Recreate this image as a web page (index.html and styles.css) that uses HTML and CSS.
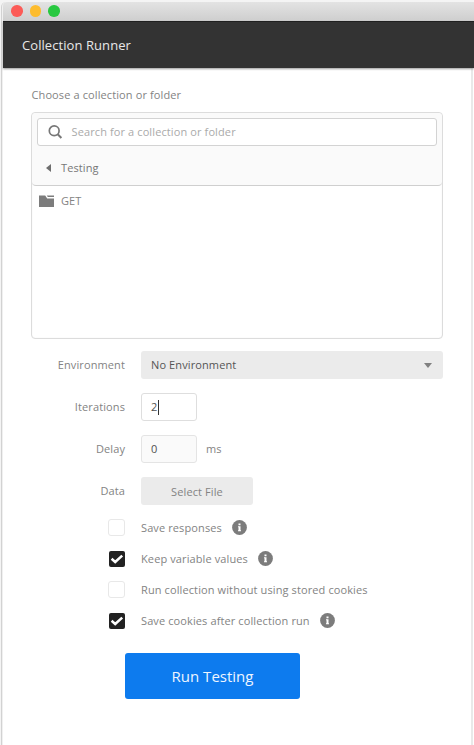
FILE: index.html
```html
<!DOCTYPE html>
<html lang="en">
<head>
<meta charset="utf-8">
<title>Collection Runner</title>
<link rel="stylesheet" href="styles.css">
</head>
<body>
<svg class="defs" width="0" height="0" aria-hidden="true">
  <symbol id="info" viewBox="0 0 15 15"><circle cx="7.5" cy="7.5" r="7.4" fill="#7c7c7c"/><path d="M6.5 3.5h2v1.7h-2zM6 6.3h2.5v4H9v1H6v-1h.5v-3H6z" fill="#fff"/></symbol>
  <symbol id="check" viewBox="0 0 16 16"><path d="M2.6 7.8l3.6 3.2 7-6.4" fill="none" stroke="#fff" stroke-width="2.5"/></symbol>
</svg>
<div class="window">
  <div class="titlebar"><i class="light red"></i><i class="light yellow"></i><i class="light green"></i></div>
  <header class="header"><h1>Collection Runner</h1></header>
  <main class="content">
    <div class="caption">Choose a collection or folder</div>
    <section class="picker">
      <div class="picker-head">
        <div class="search">
          <svg width="15" height="15" viewBox="0 0 15 15"><circle cx="6.2" cy="5.8" r="4.9" fill="none" stroke="#777" stroke-width="1.7"/><path d="M9.7 9.3l3.7 3.7" stroke="#777" stroke-width="2"/></svg>
          <span class="placeholder">Search for a collection or folder</span>
        </div>
        <div class="crumb"><svg width="5" height="8" viewBox="0 0 5 8"><path d="M5 0v8L0 4z" fill="#6e6e6e"/></svg><span>Testing</span></div>
      </div>
      <div class="folder"><svg width="15" height="12" viewBox="0 0 15 12"><path d="M0 .5h6.2l2 3H15V12H0zM7.8 .5H15v1.6H8.8z" fill="#7c7c7c"/></svg><span>GET</span></div>
    </section>
    <div class="row"><label>Environment</label><div class="select"><span>No Environment</span><svg width="8" height="5" viewBox="0 0 8 5"><path d="M0 0h8L4 5z" fill="#808080"/></svg></div></div>
    <div class="row"><label>Iterations</label><div class="input active"><span>2</span><i class="caret"></i></div></div>
    <div class="row"><label>Delay</label><div class="input"><span>0</span></div><span class="unit">ms</span></div>
    <div class="row"><label>Data</label><div class="file">Select File</div></div>
    <div class="options">
      <div class="option"><i class="box"></i><span>Save responses</span><svg class="info"><use href="#info"/></svg></div>
      <div class="option"><i class="box on"><svg><use href="#check"/></svg></i><span>Keep variable values</span><svg class="info"><use href="#info"/></svg></div>
      <div class="option"><i class="box"></i><span>Run collection without using stored cookies</span></div>
      <div class="option"><i class="box on"><svg><use href="#check"/></svg></i><span>Save cookies after collection run</span><svg class="info"><use href="#info"/></svg></div>
    </div>
    <div class="run">Run Testing</div>
  </main>
</div>
</body>
</html>
```
FILE: styles.css
```css
* { box-sizing: border-box; }
body {
  margin: 0;
  height: 745px;
  overflow: hidden;
  background: #f4f4f4;
  color: #838383;
  font: 11px/16px "Open Sans", sans-serif;
  letter-spacing: 0.11px;
}
svg { display: block; flex: none; }
.defs { position: absolute; }
.window {
  margin: 2px 0 0 1px;
  height: 743px;
  border-left: 1px solid #d2d2d2;
  box-shadow: inset 1px 0 #f0f0f0;
  border-radius: 5px 0 0 0;
  background: #fff;
}
.titlebar {
  height: 19px;
  margin-left: 1px;
  padding: 3px 0 0 8px;
  display: flex;
  gap: 7.2px;
  background: linear-gradient(#e3e3e3, #cecece);
  border-radius: 4px 0 0 0;
}
.light { width: 11.5px; height: 11.5px; border-radius: 50%; }
.red { background: #fc5b57; }
.yellow { background: #fdbc2e; }
.green { background: #28c840; }
.header {
  position: relative;
  height: 47px;
  margin-left: 1px;
  padding-left: 19px;
  display: flex;
  align-items: center;
  background: #333;
  border-top: 1px solid #202020;
  box-shadow: 0 1px 2px #999;
}
h1 { margin: 0; font-size: 13px; font-weight: 400; color: #e8e8e8; letter-spacing: 0.07px; }
.content {
  width: 471px;
  height: 677px;
  padding: 19px 28px 0 29px;
  border-right: 2px solid #e9e9e9;
}
.caption { height: 25px; padding-left: 0.5px; }
.picker {
  height: 227px;
  border: 1px solid #dcdcdc;
  border-radius: 4px;
  box-shadow: inset 0 0 1px #ddd;
}
.picker-head {
  height: 73px;
  padding: 5px 5px 0;
  background: #fafafa;
  border-bottom: 1px solid #cfcfcf;
  border-radius: 4px;
}
.search {
  height: 28px;
  padding-left: 10px;
  display: flex;
  align-items: center;
  gap: 8.5px;
  border: 1px solid #d3d3d3;
  border-radius: 3px;
  background: #fff;
}
.placeholder { color: #aaa; }
.crumb { height: 42px; padding: 1px 0 0 9px; display: flex; align-items: center; gap: 10px; color: #777; }
.folder { height: 30px; padding-left: 7px; display: flex; align-items: center; gap: 7px; }
.folder span { margin-top: -1px; }
.row { height: 28px; margin-bottom: 14px; display: flex; align-items: center; }
.picker + .row { margin-top: 12px; }
.row label { width: 94px; margin-right: 16px; text-align: right; }
.select {
  flex: 1;
  height: 28px;
  padding: 0 11px 0 10px;
  display: flex;
  align-items: center;
  justify-content: space-between;
  background: #ebebeb;
  border-radius: 3px;
  color: #555;
}
.input {
  width: 56px;
  height: 28px;
  padding-left: 9px;
  display: flex;
  align-items: center;
  border: 1px solid #e4e4e4;
  border-radius: 3px;
  background: #fafafa;
  color: #505050;
}
.active { background: #fff; border-color: #dedede; }
.caret { width: 1px; height: 15px; margin-left: 0.5px; background: #333; }
.unit { margin-left: 9px; }
.file { width: 112px; height: 28px; line-height: 29px; text-align: center; background: #ebebeb; border-radius: 3px; }
.options { margin-top: -7px; padding-left: 77px; }
.option { height: 31px; display: flex; align-items: center; }
.box { width: 17px; height: 17px; margin-right: 16px; border: 1px solid #e8e8e8; border-radius: 3px; }
.on { border: 0; width: 16px; height: 16px; margin: 0 16px 0 1px; border-radius: 2px; background: #222; }
.on svg { width: 16px; height: 16px; }
.info { width: 15px; height: 15px; margin-left: 10px; }
.run {
  width: 175px;
  height: 46px;
  margin: 17px 0 0 94px;
  border-radius: 3px;
  background: #0d7bee;
  color: #eef5ff;
  font-size: 15px;
  letter-spacing: 0;
  line-height: 46px;
  text-align: center;
}
```
